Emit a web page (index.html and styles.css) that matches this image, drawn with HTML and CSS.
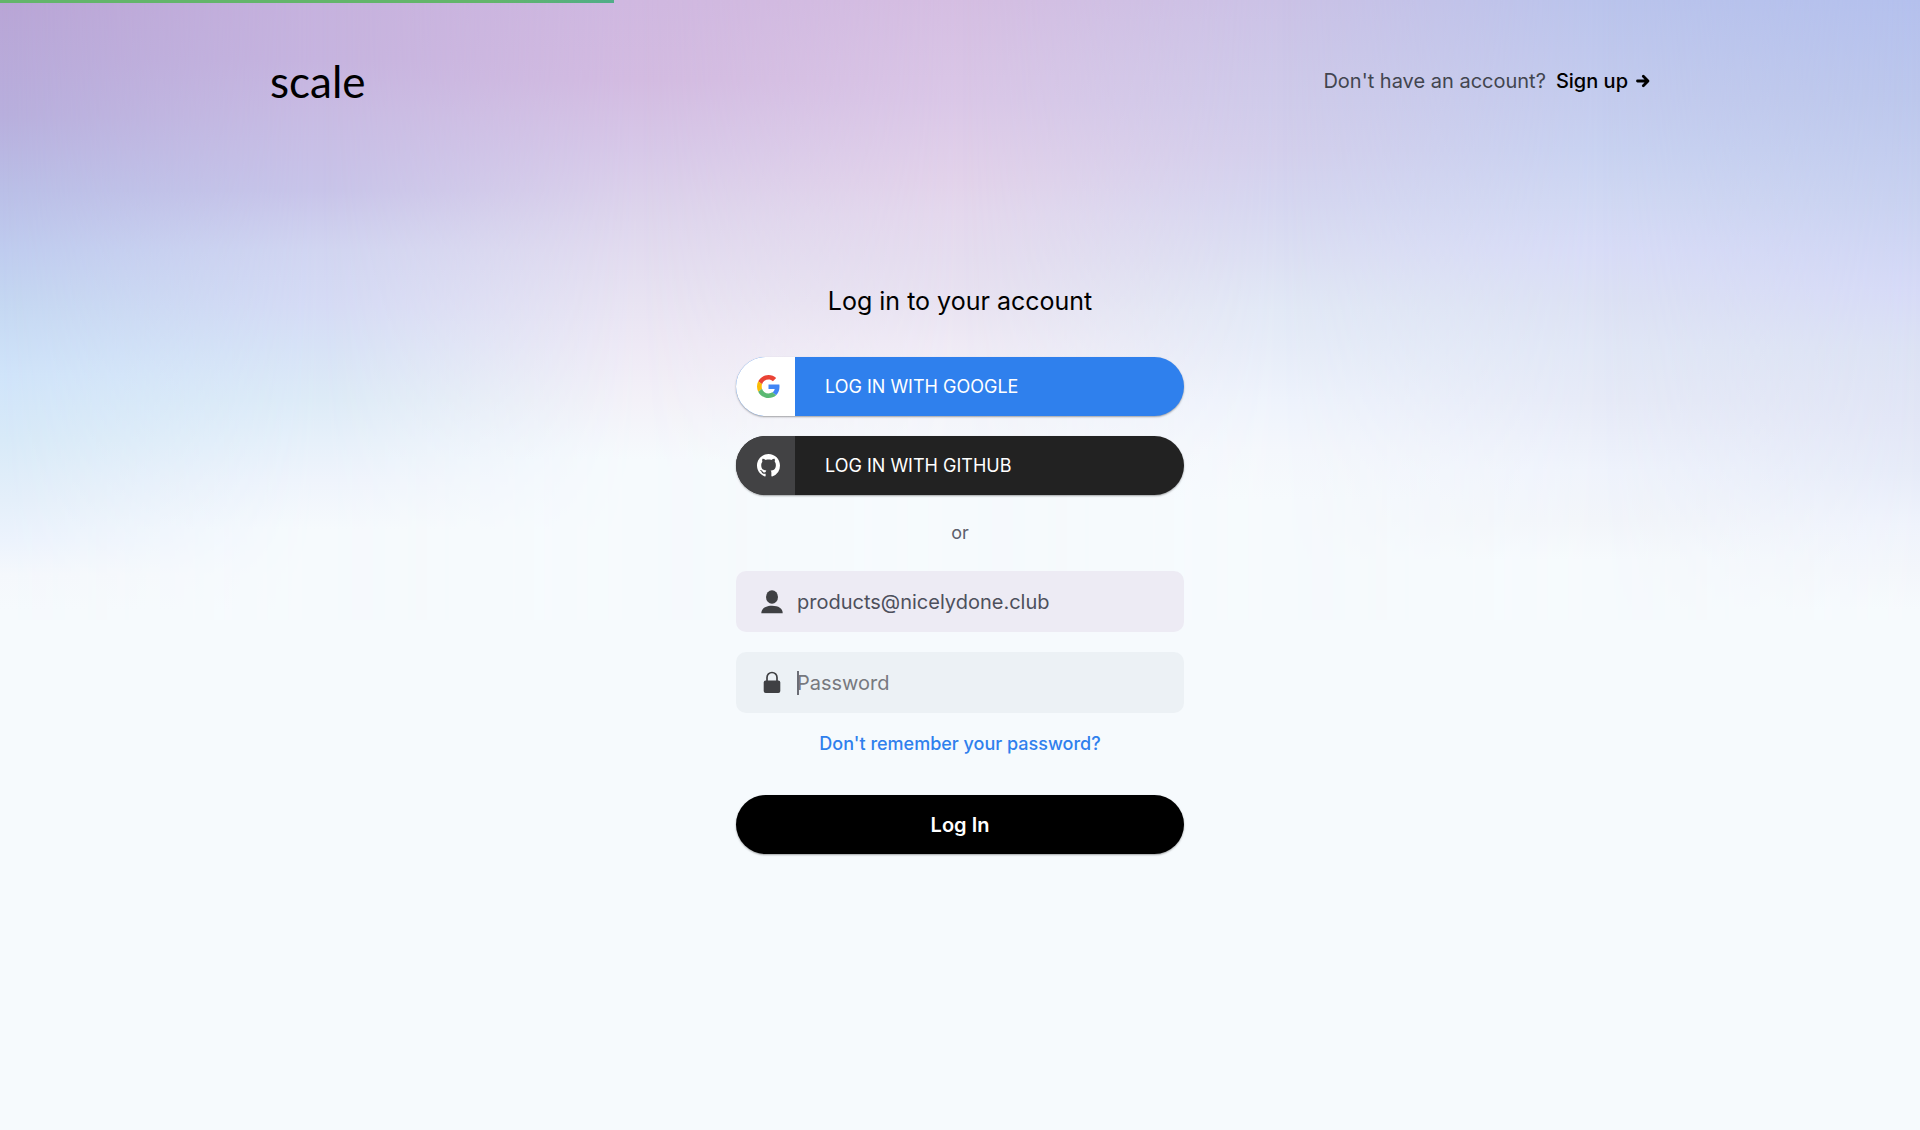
FILE: index.html
```html
<!DOCTYPE html>
<html lang="en">
  <head>
    <meta charset="UTF-8" />
    <meta name="viewport" content="width=device-width, initial-scale=1.0" />
    <title>Log in | Scale</title>
    <link rel="stylesheet" href="styles.css">
  </head>
  <body>
    <div class="backdrop" aria-hidden="true">
      <div class="band band-1"></div>
      <div class="band band-2"></div>
      <div class="band band-3"></div>
      <div class="band band-4"></div>
      <div class="band band-5"></div>
      <div class="band band-6"></div>
      <div class="band band-7"></div>
    </div>
    <div class="progress"></div>

    <header class="header">
      <a href="#" class="logo">scale</a>
      <p class="signup">
        Don't have an account?
        <a href="#" class="signup-link">Sign up
          <svg class="arrow" viewBox="0 0 14 14">
            <path d="M1.5 7h10M7.3 2.3L12 7l-4.7 4.7" fill="none" stroke="currentColor" stroke-width="2.8" stroke-linecap="round" stroke-linejoin="round"/>
          </svg>
        </a>
      </p>
    </header>

    <main class="login">
      <h1 class="title">Log in to your account</h1>

      <div class="providers">
        <button type="button" class="provider google">
          <span class="provider-icon">
            <svg viewBox="0 0 48 48" width="23" height="23">
              <path fill="#EA4335" d="M24 9.5c3.54 0 6.71 1.22 9.21 3.6l6.85-6.85C35.9 2.38 30.47 0 24 0 14.62 0 6.51 5.38 2.56 13.22l7.98 6.19C12.43 13.72 17.74 9.5 24 9.5z"/>
              <path fill="#4285F4" d="M46.98 24.55c0-1.57-.15-3.09-.38-4.55H24v9.02h12.94c-.58 2.96-2.26 5.48-4.78 7.18l7.73 6c4.51-4.18 7.09-10.36 7.09-17.65z"/>
              <path fill="#FBBC05" d="M10.53 28.59c-.48-1.45-.76-2.99-.76-4.59s.27-3.14.76-4.59l-7.98-6.19C.92 16.46 0 20.12 0 24c0 3.88.92 7.54 2.56 10.78l7.97-6.19z"/>
              <path fill="#5BB974" d="M24 48c6.48 0 11.93-2.13 15.89-5.81l-7.73-6c-2.15 1.45-4.92 2.3-8.16 2.3-6.26 0-11.57-4.22-13.47-9.91l-7.98 6.19C6.51 42.62 14.62 48 24 48z"/>
            </svg>
          </span>
          <span class="provider-text">LOG IN WITH GOOGLE</span>
        </button>
        <button type="button" class="provider github">
          <span class="provider-icon">
            <svg viewBox="0 0 16 16" width="23" height="23">
              <path fill="#fff" d="M8 0C3.58 0 0 3.58 0 8c0 3.54 2.29 6.53 5.47 7.59.4.07.55-.17.55-.38 0-.19-.01-.82-.01-1.49-2.01.37-2.53-.49-2.69-.94-.09-.23-.48-.94-.82-1.13-.28-.15-.68-.52-.01-.53.63-.01 1.08.58 1.23.82.72 1.21 1.87.87 2.33.66.07-.52.28-.87.51-1.07-1.78-.2-3.64-.89-3.64-3.95 0-.87.31-1.59.82-2.15-.08-.2-.36-1.02.08-2.12 0 0 .67-.21 2.2.82.64-.18 1.32-.27 2-.27s1.36.09 2 .27c1.53-1.04 2.2-.82 2.2-.82.44 1.1.16 1.92.08 2.12.51.56.82 1.27.82 2.15 0 3.07-1.87 3.75-3.65 3.95.29.25.54.73.54 1.48 0 1.07-.01 1.93-.01 2.2 0 .21.15.46.55.38A8.01 8.01 0 0 0 16 8c0-4.42-3.58-8-8-8z"/>
            </svg>
          </span>
          <span class="provider-text">LOG IN WITH GITHUB</span>
        </button>
      </div>

      <p class="or">or</p>

      <form class="form">
        <div class="field field-email">
          <label for="email" aria-label="Email" class="field-icon">
            <svg viewBox="0 0 22 24" width="22" height="24">
              <ellipse cx="11" cy="7" rx="6" ry="6.7"/>
              <path d="M.3 23.2C.3 18.5 4.5 15.8 11 15.8s10.7 2.700 10.7 7.400z"/>
            </svg>
          </label>
          <input type="email" id="email" class="input" value="products@nicelydone.club">
        </div>
        <div class="field">
          <label for="password" aria-label="Password" class="field-icon">
            <svg viewBox="0 0 22 24" width="22" height="24">
              <rect x="2.7" y="9.500" width="16.600" height="12.500" rx="2"/>
              <path d="M6 10V6.500a5 5 0 0 1 10 0V10" fill="none" stroke="#3f4043" stroke-width="1.700"/>
            </svg>
          </label>
          <div class="input-wrap">
            <span class="caret"></span>
            <input type="password" id="password" class="input" placeholder="Password">
          </div>
        </div>
        <a href="#" class="forgot">Don't remember your password?</a>
        <button type="submit" class="submit">Log In</button>
      </form>
    </main>
  </body>
</html>
```

FILE: styles.css
```css
*{
  box-sizing: border-box;
}
body{
  margin: 0;
  min-height: 100vh;
  background-color: #f6fafd;
  color: black;
  font-family: Inter, "Liberation Sans", sans-serif;
}
a{
  text-decoration: none;
}

/* soft colour wash: each band fades into the next one, left to right */
.backdrop{
  position: absolute;
  top: 0;
  left: 0;
  right: 0;
  height: 620px;
  z-index: -1;
}
.band{
  position: absolute;
  inset: 0;
}
.band-1{
  background: linear-gradient(rgb(185,165,214) 0, rgb(184,175,221) 115px, rgb(186,191,231) 190px, rgb(191,204,239) 250px, rgb(197,216,242) 306px, rgb(208,228,250) 375px, rgb(216,234,248) 440px, rgb(228,239,250) 500px, rgb(236,243,253) 540px, rgb(245,248,252) 575px, #f6fafd 610px);
}
.band-2{
  background: linear-gradient(rgb(198,178,222) 0, rgb(198,180,223) 60px, rgb(200,187,227) 110px, rgb(200,196,233) 190px, rgb(209,213,241) 250px, rgb(213,219,245) 306px, rgb(215,226,246) 345px, rgb(221,235,247) 400px, rgb(230,240,250) 440px, rgb(239,244,252) 480px, #f6fafd 530px);
  mask-image: linear-gradient(to right, transparent 0, black 16.67%);
}
.band-3{
  background: linear-gradient(rgb(208,184,224) 0, rgb(211,187,225) 80px, rgb(215,200,232) 150px, rgb(221,212,236) 210px, rgb(226,219,239) 250px, rgb(232,227,242) 300px, rgb(238,233,245) 345px, rgb(243,241,248) 400px, #f6fafd 460px);
  mask-image: linear-gradient(to right, transparent 16.67%, black 33.33%);
}
.band-4{
  background: linear-gradient(rgb(213,190,226) 0, rgb(218,199,231) 100px, rgb(226,210,234) 180px, rgb(228,216,237) 215px, rgb(229,221,239) 260px, rgb(232,226,241) 300px, rgb(239,234,245) 345px, rgb(244,245,250) 420px, #f6fafd 470px);
  mask-image: linear-gradient(to right, transparent 33.33%, black 50%);
}
.band-5{
  background: linear-gradient(rgb(203,194,230) 0, rgb(207,203,234) 100px, rgb(211,207,236) 150px, rgb(213,214,240) 200px, rgb(220,224,243) 260px, rgb(226,233,246) 310px, rgb(230,236,248) 345px, rgb(238,243,252) 400px, rgb(244,247,252) 450px, #f6fafd 500px);
  mask-image: linear-gradient(to right, transparent 50%, black 66.67%);
}
.band-6{
  background: linear-gradient(rgb(186,196,236) 0, rgb(196,204,238) 100px, rgb(200,210,241) 150px, rgb(208,216,243) 200px, rgb(216,220,247) 250px, rgb(220,225,244) 300px, rgb(225,231,246) 350px, rgb(230,234,247) 400px, rgb(239,243,252) 470px, rgb(242,245,250) 520px, #f6fafd 560px);
  mask-image: linear-gradient(to right, transparent 66.67%, black 83.33%);
}
.band-7{
  background: linear-gradient(rgb(180,192,237) 0, rgb(188,199,236) 100px, rgb(200,209,240) 200px, rgb(214,218,247) 290px, rgb(220,226,244) 350px, rgb(226,230,246) 420px, rgb(230,235,248) 470px, rgb(239,243,252) 525px, rgb(243,246,251) 570px, #f6fafd 610px);
  mask-image: linear-gradient(to right, transparent 83.33%, black 100%);
}

.progress{
  position: absolute;
  top: 0;
  left: 0;
  width: 32%;
  height: 3px;
  background: linear-gradient(to right, #63b56b 80%, #50ad88);
}

.header{
  display: flex;
  align-items: center;
  justify-content: space-between;
  max-width: 1420px;
  margin: 0 auto;
  padding: 56px 20px 0;
}
.logo{
  color: black;
  font-family: Lato, sans-serif;
  font-size: 44px;
  line-height: 50px;
}
.signup{
  display: flex;
  align-items: center;
  gap: 10px;
  margin: 0;
  font-size: 20px;
  color: #42454f;
}
.signup-link{
  display: flex;
  align-items: center;
  gap: 8px;
  color: black;
  font-weight: 500;
}
.arrow{
  width: 14px;
  height: 14px;
}

.login{
  width: 100%;
  max-width: 448px;
  margin: 177px auto 60px;
}
.title{
  margin: 0 0 38px;
  font-size: 25px;
  line-height: 36px;
  font-weight: 400;
  text-align: center;
}
.providers{
  display: flex;
  flex-direction: column;
  gap: 20px;
}
.provider{
  display: flex;
  align-items: center;
  height: 59px;
  padding: 0;
  border: none;
  border-radius: 30px;
  overflow: hidden;
  color: white;
  font-family: inherit;
  font-size: 18px;
  cursor: pointer;
  box-shadow: 0 1px 2px rgba(0,0,0,0.35);
}
.provider-icon{
  display: flex;
  align-items: center;
  justify-content: center;
  width: 59px;
  height: 100%;
  padding-left: 5px;
}
.provider-text{
  padding-left: 30px;
}
.google{
  background-color: #2f80ed;
}
.google .provider-icon{
  background-color: white;
}
.github{
  background-color: #222222;
}
.github .provider-icon{
  background-color: #424244;
}
.or{
  margin: 26px 0;
  font-size: 18px;
  line-height: 24px;
  text-align: center;
  color: #5d606d;
}

.form{
  display: flex;
  flex-direction: column;
}
.field{
  display: flex;
  align-items: center;
  gap: 14px;
  height: 61px;
  padding: 0 25px;
  border-radius: 10px;
  background-color: #ecf1f5;
}
.field-email{
  margin-bottom: 20px;
  background-color: #edebf4;
}
.field-icon{
  display: flex;
  fill: #3f4043;
}
.input-wrap{
  position: relative;
  flex: 1;
  display: flex;
}
.input{
  flex: 1;
  min-width: 0;
  height: 40px;
  padding: 0;
  border: none;
  outline: none;
  background: none;
  font-family: inherit;
  font-size: 20px;
  color: #4d505c;
}
.input::placeholder{
  color: #77797f;
}
.caret{
  position: absolute;
  top: 8px;
  left: 0;
  width: 2px;
  height: 24px;
  background-color: #6b6d75;
}
.forgot{
  align-self: center;
  margin: 19px 0 39px;
  font-size: 18px;
  line-height: 24px;
  font-weight: 500;
  color: #2f80ed;
}
.submit{
  height: 59px;
  border: none;
  border-radius: 30px;
  background-color: black;
  color: white;
  font-family: inherit;
  font-size: 20px;
  font-weight: 600;
  cursor: pointer;
  box-shadow: 0 1px 2px rgba(0,0,0,0.35);
}
```
